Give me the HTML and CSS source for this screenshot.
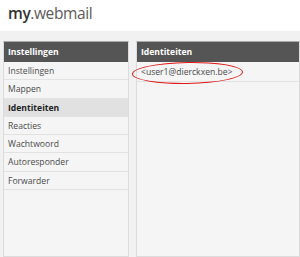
FILE: index.html
```html
<!DOCTYPE html>
<html lang="nl">
<head>
    <meta charset="UTF-8">
    <title>my.webmail</title>
    <link rel="stylesheet" href="styles.css">
</head>
<body>
<div class="top">
    <div class="logo"><b>my</b>.webmail</div>
</div>
<div class="main">
    <div class="panel side">
        <div class="panel-head">Instellingen</div>
        <ul class="menu">
            <li>Instellingen</li>
            <li>Mappen</li>
            <li class="current">Identiteiten</li>
            <li>Reacties</li>
            <li>Wachtwoord</li>
            <li>Autoresponder</li>
            <li>Forwarder</li>
        </ul>
    </div>
    <div class="panel content">
        <div class="panel-head">Identiteiten</div>
        <ul class="list">
            <li>&lt;user1@dierckxen.be&gt;</li>
        </ul>
        <!--rode markering-->
        <div class="mark"></div>
    </div>
</div>
</body>
</html>
```

FILE: styles.css
```css
* {
    padding: 0;
    margin: 0;
    list-style: none;
    box-sizing: border-box;
}

body {
    background: #f1f1f1;
    font-family: "Open Sans", "Liberation Sans", sans-serif;
    font-size: 8.6px;
    color: #4a4a4a;
    overflow: hidden;
    height: 257px;
}

.top {
    height: 31px;
    background: #fff;
    padding: 4px 0 0 8px;
}

.logo {
    font-size: 15.5px;
    color: #5a5a5a;
    letter-spacing: -0.4px;
    line-height: 18px;
}

.logo b {
    color: #333;
    font-weight: 600;
}

.main {
    display: flex;
    gap: 7px;
    padding: 10px 0 0 3px;
}

.panel {
    background: #f5f5f5;
    border: 1px solid #dcdcdc;
    border-top-color: #aaa;
    height: 216px;
    position: relative;
}

.side {
    width: 126px;
}

.content {
    flex: 1;
}

.panel-head {
    background: #555;
    color: #fff;
    font-weight: bold;
    height: 20px;
    line-height: 20px;
    padding-left: 4px;
}

.menu li {
    line-height: 16.3px;
    padding-top: 1px;
    border-bottom: 1px solid #e2e2e2;
    padding-left: 4px;
}

.menu li.current {
    background: #e1e1e1;
    font-weight: bold;
    color: #222;
}

.list li {
    line-height: 18px;
    padding-top: 1px;
    border-bottom: 1px solid #e2e2e2;
    padding-left: 4px;
}

.mark {
    position: absolute;
    left: -5px;
    top: 20px;
    width: 111px;
    height: 22px;
    border: 1.5px solid #e01818;
    border-radius: 50%;
    transform: rotate(-1deg);
}
```
